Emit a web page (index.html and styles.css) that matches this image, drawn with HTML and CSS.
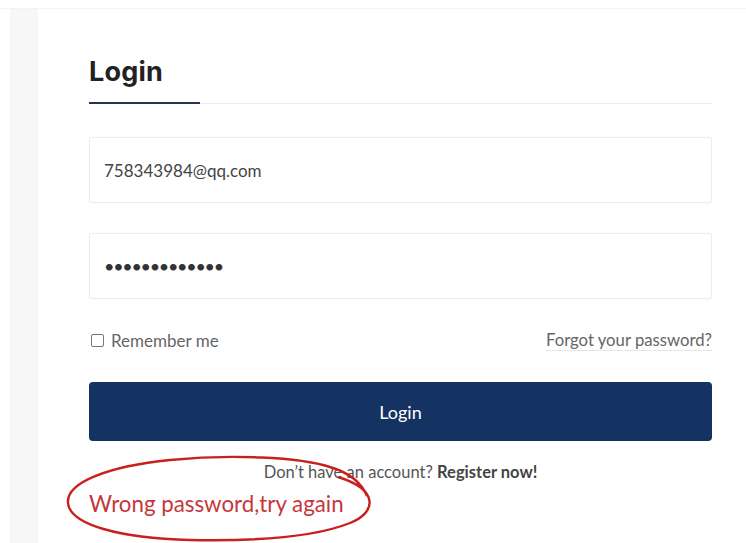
FILE: index.html
```html
<!DOCTYPE html>
<html lang="en">
<head>
<meta charset="utf-8">
<title>Login</title>
<link rel="stylesheet" href="styles.css">
</head>
<body>
<div class="frame">
  <div class="side"></div>
  <main class="card">
    <h1 class="title">Login</h1>
    <div class="rule"><span class="rule-accent"></span><span class="rule-rest"></span></div>
    <form class="form">
      <div class="field">758343984@qq.com</div>
      <div class="field field-pass">•••••••••••••</div>
      <div class="opts">
        <label class="remember"><span class="box"></span>Remember me</label>
        <a class="forgot">Forgot your password?</a>
      </div>
      <div class="btn">Login</div>
      <p class="register">Don’t have an account? <b>Register now!</b></p>
      <p class="error">Wrong password,try again</p>
    </form>
  </main>
</div>
<svg class="annot" width="746" height="543" viewBox="0 0 746 543">
  <path d="M338 477 C 380 490, 376 513, 350 523 C 310 539, 240 541, 190 540 C 120 538, 70 525, 68 503 C 66 482, 110 466, 170 460 C 230 454, 300 457, 330 467 C 350 473, 362 484, 367 496" fill="none" stroke="#c8201f" stroke-width="2.4"/>
</svg>
</body>
</html>
```
FILE: styles.css
```css
html, body {
  margin: 0;
  padding: 0;
  background: #ffffff;
}
body {
  width: 746px;
  height: 543px;
  overflow: hidden;
  position: relative;
  font-family: Lato, "Liberation Sans", sans-serif;
}
.frame {
  display: flex;
  margin-top: 8px;
  border-top: 1px solid #f3f3f3;
  height: 534px;
}
.side {
  width: 28px;
  margin-left: 10px;
  background: #f7f7f7;
}
.card {
  flex: 1;
  padding: 47px 34px 0 51px;
}
.title {
  margin: 0;
  font-family: Inter, "Open Sans", sans-serif;
  font-weight: 700;
  font-size: 27px;
  line-height: 32px;
  color: #222;
  letter-spacing: 0.2px;
}
.rule {
  display: flex;
  align-items: flex-end;
  margin-top: 14px;
}
.rule-accent {
  width: 111px;
  height: 2px;
  background: #283550;
}
.rule-rest {
  flex: 1;
  height: 1px;
  background: #ececec;
}
.form {
  display: flex;
  flex-direction: column;
  margin-top: 33px;
}
.field {
  height: 64px;
  border: 1px solid #ececec;
  border-radius: 2px;
  box-shadow: 0 0 2px rgba(0,0,0,0.04);
  padding-left: 14px;
  display: flex;
  align-items: center;
  font-size: 17px;
  color: #444;
}
.field-pass {
  margin-top: 30px;
  font-size: 18px;
  letter-spacing: -1.3px;
  color: #333;
}
.opts {
  margin-top: 29px;
  display: flex;
  justify-content: space-between;
  align-items: center;
  height: 24px;
  font-size: 17px;
  color: #666;
}
.remember {
  display: flex;
  align-items: center;
  gap: 7px;
  padding-left: 2px;
}
.box {
  width: 11px;
  height: 11px;
  border: 1px solid #777;
  border-radius: 2px;
}
.forgot {
  color: #666;
  font-size: 16.7px;
  border-bottom: 1px solid #e6e6e6;
  line-height: 20px;
}
.btn {
  margin-top: 30px;
  height: 59px;
  background: #143363;
  border-radius: 4px;
  color: #fff;
  font-size: 18px;
  display: flex;
  align-items: center;
  justify-content: center;
}
.register {
  margin: 21px 0 0;
  text-align: center;
  font-size: 16.5px;
  line-height: 20px;
  color: #555;
}
.register b {
  color: #444;
}
.error {
  margin: 10px 0 0;
  font-size: 22.3px;
  line-height: 24px;
  color: #c7363b;
}
.annot {
  position: absolute;
  left: 0;
  top: 0;
  pointer-events: none;
}
```
